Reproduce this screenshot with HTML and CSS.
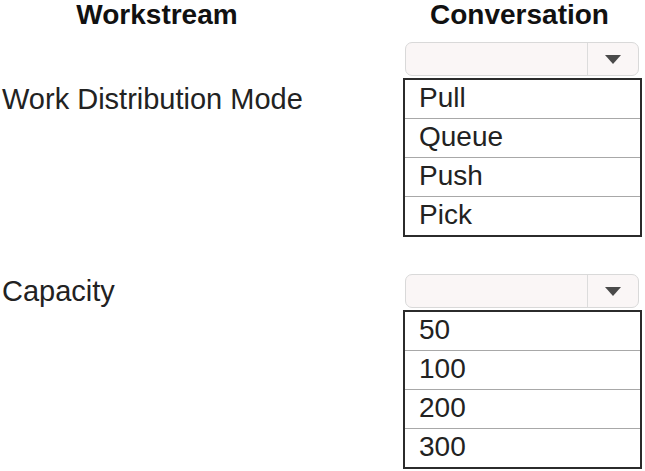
FILE: index.html
```html
<!DOCTYPE html>
<html lang="en">
<head>
  <meta charset="UTF-8">
  <title>Workstream settings</title>
  <link rel="stylesheet" href="styles.css">
</head>
<body>

<div class="form">
  <div class="row heads">
    <h2 class="head head-workstream">Workstream</h2>
    <h2 class="head head-conversation">Conversation</h2>
  </div>

  <div class="row field field-mode">
    <div class="label">Work Distribution Mode</div>
    <div class="picker">
      <div class="select">
        <span class="select-value"></span>
        <span class="select-arrow">
          <svg width="16" height="9" viewBox="0 0 16 9"><path d="M0 0 H16 L8 9 Z" fill="#4a4a4a"/></svg>
        </span>
      </div>
      <ul class="options">
        <li>Pull</li>
        <li>Queue</li>
        <li>Push</li>
        <li>Pick</li>
      </ul>
    </div>
  </div>

  <div class="row field field-capacity">
    <div class="label">Capacity</div>
    <div class="picker">
      <div class="select">
        <span class="select-value"></span>
        <span class="select-arrow">
          <svg width="16" height="9" viewBox="0 0 16 9"><path d="M0 0 H16 L8 9 Z" fill="#4a4a4a"/></svg>
        </span>
      </div>
      <ul class="options">
        <li>50</li>
        <li>100</li>
        <li>200</li>
        <li>300</li>
      </ul>
    </div>
  </div>
</div>

</body>
</html>
```

FILE: styles.css
```css
body {
  margin: 0;
  background-color: white;
  font-family: "Liberation Sans", Arial, sans-serif;
  color: #222;
}
.row {
  display: grid;
  grid-template-columns: 403px 239px;
}
.heads {
  height: 42px;
}
.head {
  margin: 0;
  font-size: 28px;
  line-height: 30px;
  font-weight: bold;
  color: #111;
  text-align: center;
}
.head-workstream {
  padding-right: 89px;
}
.head-conversation {
  padding-right: 6px;
}
.label {
  font-size: 29px;
  padding-left: 2px;
}
.field-mode .label {
  padding-top: 38px;
  line-height: 38px;
}
.field-capacity {
  margin-top: 37px;
}
.field-capacity .label {
  line-height: 34px;
}
.select {
  display: flex;
  height: 32px;
  margin: 0 3px 2px 2px;
  border: 1px solid #d9d9d9;
  border-radius: 7px;
  background-color: #faf6f6;
}
.select-value {
  flex: 1;
}
.select-arrow {
  width: 50px;
  border-left: 1px solid #dcdcdc;
  display: flex;
  align-items: center;
  justify-content: center;
}
.options {
  list-style: none;
  margin: 0;
  padding: 0;
  border: 2px solid #2b2b2b;
}
.options li {
  height: 38px;
  line-height: 36px;
  padding-left: 14px;
  font-size: 28px;
  border-bottom: 1px solid #a8a8a8;
}
.options li:last-child {
  border-bottom: none;
}
```
